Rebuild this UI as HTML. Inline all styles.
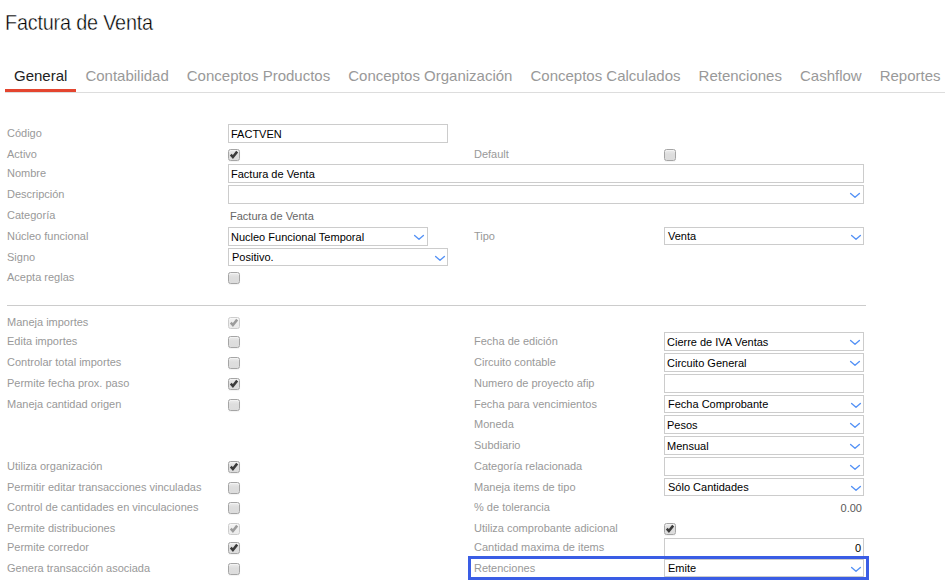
<!DOCTYPE html><html><head><meta charset="utf-8"><style>
*{margin:0;padding:0;box-sizing:content-box}
html,body{width:945px;height:582px;overflow:hidden;background:#fff;font-family:"Liberation Sans",sans-serif}
.title{position:absolute;left:5px;top:11px;font-size:22px;line-height:24px;color:#000;letter-spacing:-0.2px;white-space:nowrap;transform:scaleX(0.9);transform-origin:0 0;-webkit-text-stroke:0.4px #fff;paint-order:normal}
.tabs{position:absolute;left:5px;top:67px;white-space:nowrap;font-size:15px;line-height:17px;height:25px}
.tab{display:inline-block;padding:0 9px;height:22px;color:#999;border-bottom:3px solid transparent;vertical-align:top}
.tab.act{color:#222;border-bottom-color:#e4452f}
.tabline{position:absolute;left:5px;top:92px;width:940px;height:1px;background:#ddd}
.t{position:absolute;font-size:11px;line-height:13px;height:13px;white-space:nowrap;color:#999}
.b{position:absolute;border:1px solid #ccc;background:#fff}
.v{position:absolute;font-size:11px;line-height:13px;color:#000;white-space:nowrap}
.ch{position:absolute}
.cb{position:absolute;width:10px;height:10px;border:1px solid #a5a5a5;border-radius:2.5px;background:linear-gradient(#ececec,#dedede 40%,#dcdcdc);box-shadow:inset 0 1px 0 #f3f3f3,0 1px 1px rgba(0,0,0,0.05)}
.cb.dis{border-color:#cdcdcd;background:linear-gradient(#f2f2f2,#ebebeb);box-shadow:inset 0 1px 0 #f8f8f8}
.sep{position:absolute;left:7px;top:305px;width:859px;height:1px;background:#ccc}
.hl{position:absolute;left:468px;top:556px;width:395px;height:18px;border:3px solid #3a5de5}
</style></head><body><div class="title">Factura de Venta</div>
<div class="tabs"><span class="tab act">General</span><span class="tab">Contabilidad</span><span class="tab">Conceptos Productos</span><span class="tab">Conceptos Organización</span><span class="tab">Conceptos Calculados</span><span class="tab">Retenciones</span><span class="tab">Cashflow</span><span class="tab">Reportes</span></div>
<div class="tabline"></div>
<div class="t" style="left:7px;top:127.0px;">Código</div>
<div class="b" style="left:228px;top:124px;width:218px;height:17px;"><span class="v" style="left:2px;top:3px">FACTVEN</span></div>
<div class="t" style="left:7px;top:148.0px;">Activo</div>
<div class="cb" style="left:228px;top:149px"><svg width="12" height="12" viewBox="0 0 12 12" style="position:absolute;left:-1px;top:-1px;overflow:visible"><polyline points="3.6,6.6 4.9,8.1 8.4,3.6" fill="none" stroke="#3b3b3b" stroke-width="2.5" stroke-linecap="square" stroke-linejoin="miter"/></svg></div>
<div class="t" style="left:474px;top:148.0px;">Default</div>
<div class="cb" style="left:664px;top:149px"></div>
<div class="t" style="left:7px;top:167.0px;">Nombre</div>
<div class="b" style="left:228px;top:164px;width:634px;height:17px;"><span class="v" style="left:2px;top:3px">Factura de Venta</span></div>
<div class="t" style="left:7px;top:188.0px;">Descripción</div>
<div class="b" style="left:228px;top:185px;width:634px;height:17px;"><svg class="ch" width="12" height="8" style="left:620px;top:5.0px" viewBox="0 0 12 8"><polyline points="1.6,2.5 6.0,6.2 10.4,2.5" fill="none" stroke="#5693f6" stroke-width="1.4" stroke-linecap="round" stroke-linejoin="round"/></svg></div>
<div class="t" style="left:7px;top:209.0px;">Categoría</div>
<div class="t" style="left:230px;top:210.0px;color:#666;">Factura de Venta</div>
<div class="t" style="left:7px;top:230.0px;">Núcleo funcional</div>
<div class="b" style="left:228px;top:227px;width:198px;height:17px;"><span class="v" style="left:2px;top:3px">Nucleo Funcional Temporal</span><svg class="ch" width="12" height="8" style="left:184px;top:5.0px" viewBox="0 0 12 8"><polyline points="1.6,2.5 6.0,6.2 10.4,2.5" fill="none" stroke="#5693f6" stroke-width="1.4" stroke-linecap="round" stroke-linejoin="round"/></svg></div>
<div class="t" style="left:474px;top:230.0px;">Tipo</div>
<div class="b" style="left:664px;top:227px;width:198px;height:16px;"><span class="v" style="left:3px;top:2px">Venta</span><svg class="ch" width="12" height="8" style="left:185px;top:5.3px" viewBox="0 0 12 8"><polyline points="1.6,2.5 6.0,6.2 10.4,2.5" fill="none" stroke="#5693f6" stroke-width="1.4" stroke-linecap="round" stroke-linejoin="round"/></svg></div>
<div class="t" style="left:7px;top:251.0px;">Signo</div>
<div class="b" style="left:228px;top:248px;width:218px;height:16px;"><span class="v" style="left:3px;top:2px">Positivo.</span><svg class="ch" width="12" height="8" style="left:205px;top:5.3px" viewBox="0 0 12 8"><polyline points="1.6,2.5 6.0,6.2 10.4,2.5" fill="none" stroke="#5693f6" stroke-width="1.4" stroke-linecap="round" stroke-linejoin="round"/></svg></div>
<div class="t" style="left:7px;top:271.0px;">Acepta reglas</div>
<div class="cb" style="left:228px;top:272px"></div>
<div class="sep"></div>
<div class="t" style="left:7px;top:316.0px;">Maneja importes</div>
<div class="cb dis" style="left:228px;top:317px"><svg width="12" height="12" viewBox="0 0 12 12" style="position:absolute;left:-1px;top:-1px;overflow:visible"><polyline points="3.6,6.6 4.9,8.1 8.4,3.6" fill="none" stroke="#9c9c9c" stroke-width="2.5" stroke-linecap="square" stroke-linejoin="miter"/></svg></div>
<div class="t" style="left:7px;top:335.0px;">Edita importes</div>
<div class="cb" style="left:228px;top:336px"></div>
<div class="t" style="left:7px;top:356.0px;">Controlar total importes</div>
<div class="cb" style="left:228px;top:357px"></div>
<div class="t" style="left:7px;top:377.0px;">Permite fecha prox. paso</div>
<div class="cb" style="left:228px;top:378px"><svg width="12" height="12" viewBox="0 0 12 12" style="position:absolute;left:-1px;top:-1px;overflow:visible"><polyline points="3.6,6.6 4.9,8.1 8.4,3.6" fill="none" stroke="#3b3b3b" stroke-width="2.5" stroke-linecap="square" stroke-linejoin="miter"/></svg></div>
<div class="t" style="left:7px;top:398.0px;">Maneja cantidad origen</div>
<div class="cb" style="left:228px;top:399px"></div>
<div class="t" style="left:7px;top:460.0px;">Utiliza organización</div>
<div class="cb" style="left:228px;top:461px"><svg width="12" height="12" viewBox="0 0 12 12" style="position:absolute;left:-1px;top:-1px;overflow:visible"><polyline points="3.6,6.6 4.9,8.1 8.4,3.6" fill="none" stroke="#3b3b3b" stroke-width="2.5" stroke-linecap="square" stroke-linejoin="miter"/></svg></div>
<div class="t" style="left:7px;top:481.0px;">Permitir editar transacciones vinculadas</div>
<div class="cb" style="left:228px;top:482px"></div>
<div class="t" style="left:7px;top:501.0px;">Control de cantidades en vinculaciones</div>
<div class="cb" style="left:228px;top:502px"></div>
<div class="t" style="left:7px;top:522.0px;">Permite distribuciones</div>
<div class="cb dis" style="left:228px;top:523px"><svg width="12" height="12" viewBox="0 0 12 12" style="position:absolute;left:-1px;top:-1px;overflow:visible"><polyline points="3.6,6.6 4.9,8.1 8.4,3.6" fill="none" stroke="#9c9c9c" stroke-width="2.5" stroke-linecap="square" stroke-linejoin="miter"/></svg></div>
<div class="t" style="left:7px;top:541.0px;">Permite corredor</div>
<div class="cb" style="left:228px;top:542px"><svg width="12" height="12" viewBox="0 0 12 12" style="position:absolute;left:-1px;top:-1px;overflow:visible"><polyline points="3.6,6.6 4.9,8.1 8.4,3.6" fill="none" stroke="#3b3b3b" stroke-width="2.5" stroke-linecap="square" stroke-linejoin="miter"/></svg></div>
<div class="t" style="left:7px;top:562.0px;">Genera transacción asociada</div>
<div class="cb" style="left:228px;top:563px"></div>
<div class="t" style="left:474px;top:335.0px;">Fecha de edición</div>
<div class="b" style="left:664px;top:332px;width:198px;height:17px;"><span class="v" style="left:2px;top:3px">Cierre de IVA Ventas</span><svg class="ch" width="12" height="8" style="left:184px;top:5.0px" viewBox="0 0 12 8"><polyline points="1.6,2.5 6.0,6.2 10.4,2.5" fill="none" stroke="#5693f6" stroke-width="1.4" stroke-linecap="round" stroke-linejoin="round"/></svg></div>
<div class="t" style="left:474px;top:356.0px;">Circuito contable</div>
<div class="b" style="left:664px;top:353px;width:198px;height:17px;"><span class="v" style="left:2px;top:3px">Circuito General</span><svg class="ch" width="12" height="8" style="left:184px;top:5.0px" viewBox="0 0 12 8"><polyline points="1.6,2.5 6.0,6.2 10.4,2.5" fill="none" stroke="#5693f6" stroke-width="1.4" stroke-linecap="round" stroke-linejoin="round"/></svg></div>
<div class="t" style="left:474px;top:377.0px;">Numero de proyecto afip</div>
<div class="b" style="left:664px;top:374px;width:198px;height:17px;"></div>
<div class="t" style="left:474px;top:398.0px;">Fecha para vencimientos</div>
<div class="b" style="left:664px;top:395px;width:198px;height:16px;"><span class="v" style="left:3px;top:2px">Fecha Comprobante</span><svg class="ch" width="12" height="8" style="left:185px;top:5.3px" viewBox="0 0 12 8"><polyline points="1.6,2.5 6.0,6.2 10.4,2.5" fill="none" stroke="#5693f6" stroke-width="1.4" stroke-linecap="round" stroke-linejoin="round"/></svg></div>
<div class="t" style="left:474px;top:418.0px;">Moneda</div>
<div class="b" style="left:664px;top:415px;width:198px;height:17px;"><span class="v" style="left:2px;top:3px">Pesos</span><svg class="ch" width="12" height="8" style="left:184px;top:5.0px" viewBox="0 0 12 8"><polyline points="1.6,2.5 6.0,6.2 10.4,2.5" fill="none" stroke="#5693f6" stroke-width="1.4" stroke-linecap="round" stroke-linejoin="round"/></svg></div>
<div class="t" style="left:474px;top:439.0px;">Subdiario</div>
<div class="b" style="left:664px;top:436px;width:198px;height:17px;"><span class="v" style="left:2px;top:3px">Mensual</span><svg class="ch" width="12" height="8" style="left:184px;top:5.0px" viewBox="0 0 12 8"><polyline points="1.6,2.5 6.0,6.2 10.4,2.5" fill="none" stroke="#5693f6" stroke-width="1.4" stroke-linecap="round" stroke-linejoin="round"/></svg></div>
<div class="t" style="left:474px;top:460.0px;">Categoría relacionada</div>
<div class="b" style="left:664px;top:457px;width:198px;height:17px;"><svg class="ch" width="12" height="8" style="left:184px;top:5.0px" viewBox="0 0 12 8"><polyline points="1.6,2.5 6.0,6.2 10.4,2.5" fill="none" stroke="#5693f6" stroke-width="1.4" stroke-linecap="round" stroke-linejoin="round"/></svg></div>
<div class="t" style="left:474px;top:481.0px;">Maneja items de tipo</div>
<div class="b" style="left:664px;top:478px;width:198px;height:16px;"><span class="v" style="left:3px;top:2px">Sólo Cantidades</span><svg class="ch" width="12" height="8" style="left:185px;top:5.3px" viewBox="0 0 12 8"><polyline points="1.6,2.5 6.0,6.2 10.4,2.5" fill="none" stroke="#5693f6" stroke-width="1.4" stroke-linecap="round" stroke-linejoin="round"/></svg></div>
<div class="t" style="left:474px;top:501.0px;">% de tolerancia</div>
<div class="t" style="left:862px;top:502.0px;color:#5a5a5a;transform:translateX(-100%);">0.00</div>
<div class="t" style="left:474px;top:522.0px;">Utiliza comprobante adicional</div>
<div class="cb" style="left:664px;top:523px"><svg width="12" height="12" viewBox="0 0 12 12" style="position:absolute;left:-1px;top:-1px;overflow:visible"><polyline points="3.6,6.6 4.9,8.1 8.4,3.6" fill="none" stroke="#3b3b3b" stroke-width="2.5" stroke-linecap="square" stroke-linejoin="miter"/></svg></div>
<div class="t" style="left:474px;top:541.0px;">Cantidad maxima de items</div>
<div class="b" style="left:664px;top:538px;width:198px;height:17px;"><span class="v" style="right:2px;top:3px">0</span></div>
<div class="t" style="left:474px;top:562.0px;">Retenciones</div>
<div class="b" style="left:664px;top:559px;width:198px;height:16px;"><span class="v" style="left:3px;top:2px">Emite</span><svg class="ch" width="12" height="8" style="left:185px;top:5.3px" viewBox="0 0 12 8"><polyline points="1.6,2.5 6.0,6.2 10.4,2.5" fill="none" stroke="#5693f6" stroke-width="1.4" stroke-linecap="round" stroke-linejoin="round"/></svg></div>
<div class="hl"></div></body></html>
